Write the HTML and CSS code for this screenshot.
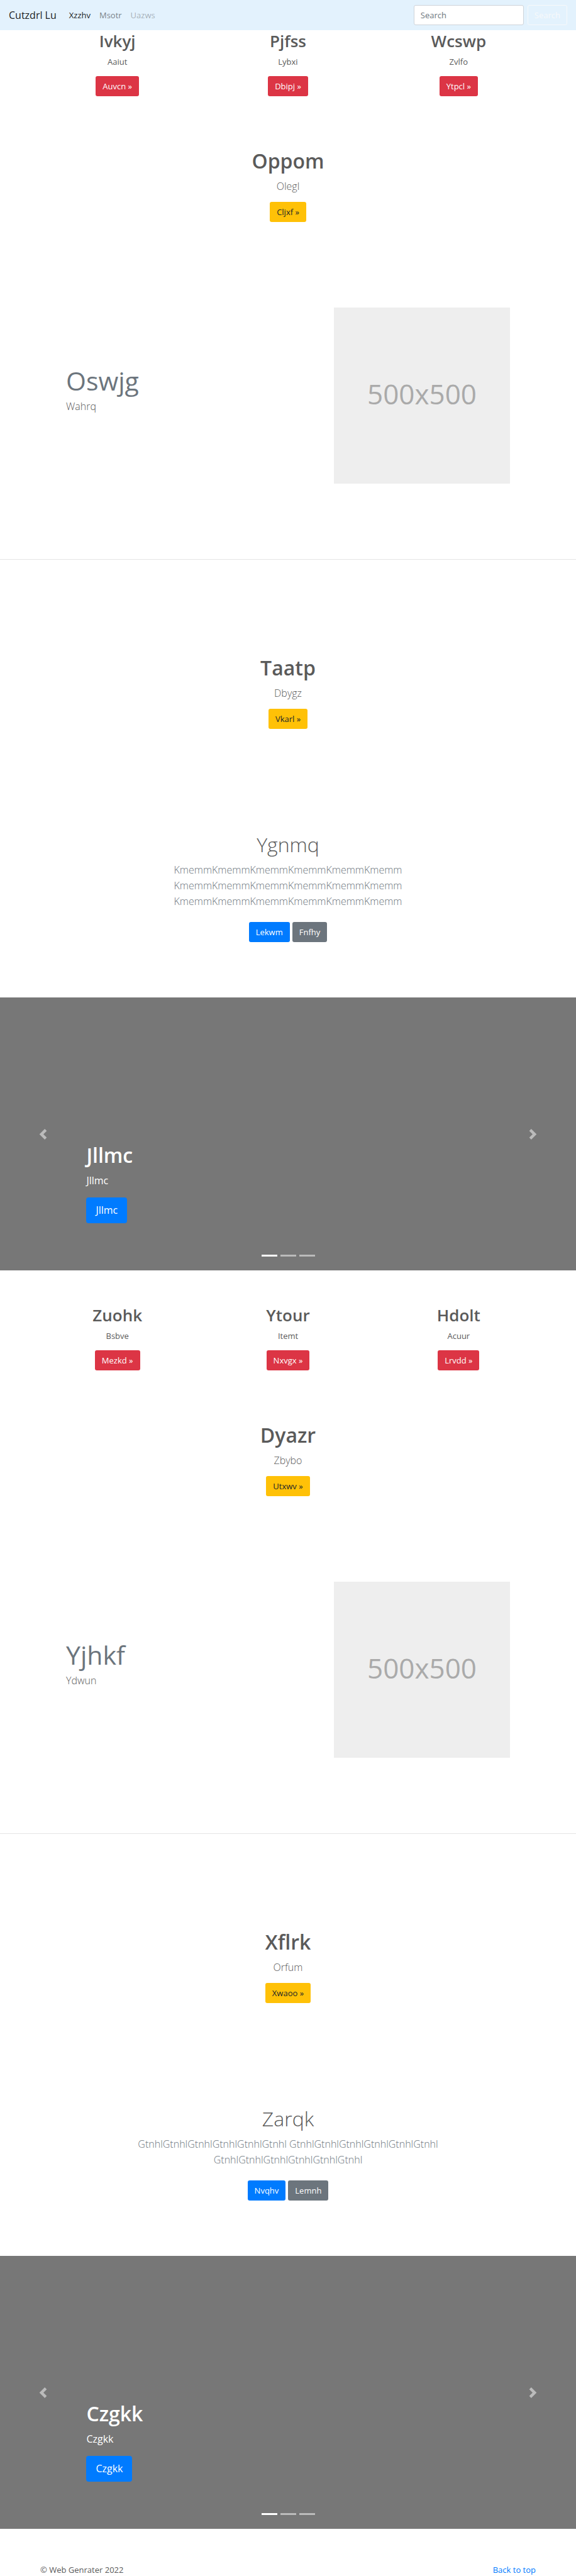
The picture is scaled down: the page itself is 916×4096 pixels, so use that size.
FILE: index.html
```html
<!DOCTYPE html>
<html lang="en">
<head>
<meta charset="utf-8">
<title>Cutzdrl Lu</title>
<link rel="stylesheet" href="styles.css">
</head>
<body id="top">
<header class="navbar">
  <a class="brand" href="#top">Cutzdrl Lu</a>
  <nav class="nav">
    <a class="nav-link active" href="#">Xzzhv</a>
    <a class="nav-link" href="#">Msotr</a>
    <a class="nav-link disabled" href="#">Uazws</a>
  </nav>
  <form class="search">
    <input class="search-input" type="search" placeholder="Search" aria-label="Search">
    <button class="btn btn-outline" type="submit">Search</button>
  </form>
</header>
<main>
  <section class="columns">
    <div class="column"><h2>Ivkyj</h2><p>Aaiut</p><a class="btn btn-danger" href="#">Auvcn »</a></div>
    <div class="column"><h2>Pjfss</h2><p>Lybxi</p><a class="btn btn-danger" href="#">Dbipj »</a></div>
    <div class="column"><h2>Wcswp</h2><p>Zvlfo</p><a class="btn btn-danger" href="#">Ytpcl »</a></div>
  </section>
  <section class="callout">
    <h2 class="title">Oppom</h2>
    <p class="lead">Olegl</p>
    <a class="btn btn-warning" href="#">Cljxf »</a>
  </section>
  <section class="featurette">
    <div class="featurette-text"><h2>Oswjg</h2><p class="lead">Wahrq</p></div>
    <div class="placeholder">500x500</div>
  </section>
  <hr class="divider">
  <section class="callout callout-spaced">
    <h2 class="title">Taatp</h2>
    <p class="lead">Dbygz</p>
    <a class="btn btn-warning" href="#">Vkarl »</a>
  </section>
  <section class="jumbotron">
    <h1 class="title title-light">Ygnmq</h1>
    <p class="lead muted">KmemmKmemmKmemmKmemmKmemmKmemm KmemmKmemmKmemmKmemmKmemmKmemm KmemmKmemmKmemmKmemmKmemmKmemm</p>
    <div class="actions"><a class="btn btn-primary" href="#">Lekwm</a><a class="btn btn-secondary" href="#">Fnfhy</a></div>
  </section>
  <section class="carousel">
    <button class="control" type="button" aria-label="Previous"><svg class="chevron" viewBox="0 0 8 8"><path d="M5.25 0l-4 4 4 4 1.5-1.5-2.5-2.5 2.5-2.5-1.5-1.5z"/></svg></button>
    <div class="slide">
      <div class="caption">
        <h1 class="title">Jllmc</h1>
        <p>Jllmc</p>
        <a class="btn btn-primary btn-lg" href="#">Jllmc</a>
      </div>
      <div class="indicators"><span class="indicator current"></span><span class="indicator"></span><span class="indicator"></span></div>
    </div>
    <button class="control" type="button" aria-label="Next"><svg class="chevron" viewBox="0 0 8 8"><path d="M2.75 0l-1.5 1.5 2.5 2.5-2.5 2.5 1.5 1.5 4-4-4-4z"/></svg></button>
  </section>
  <section class="columns columns-spaced">
    <div class="column"><h2>Zuohk</h2><p>Bsbve</p><a class="btn btn-danger" href="#">Mezkd »</a></div>
    <div class="column"><h2>Ytour</h2><p>Itemt</p><a class="btn btn-danger" href="#">Nxvgx »</a></div>
    <div class="column"><h2>Hdolt</h2><p>Acuur</p><a class="btn btn-danger" href="#">Lrvdd »</a></div>
  </section>
  <section class="callout">
    <h2 class="title">Dyazr</h2>
    <p class="lead">Zbybo</p>
    <a class="btn btn-warning" href="#">Utxwv »</a>
  </section>
  <section class="featurette">
    <div class="featurette-text"><h2>Yjhkf</h2><p class="lead">Ydwun</p></div>
    <div class="placeholder">500x500</div>
  </section>
  <hr class="divider">
  <section class="callout callout-spaced">
    <h2 class="title">Xflrk</h2>
    <p class="lead">Orfum</p>
    <a class="btn btn-warning" href="#">Xwaoo »</a>
  </section>
  <section class="jumbotron">
    <h1 class="title title-light">Zarqk</h1>
    <p class="lead muted">GtnhlGtnhlGtnhlGtnhlGtnhlGtnhl GtnhlGtnhlGtnhlGtnhlGtnhlGtnhl GtnhlGtnhlGtnhlGtnhlGtnhlGtnhl</p>
    <div class="actions"><a class="btn btn-primary" href="#">Nvqhv</a><a class="btn btn-secondary" href="#">Lemnh</a></div>
  </section>
  <section class="carousel">
    <button class="control" type="button" aria-label="Previous"><svg class="chevron" viewBox="0 0 8 8"><path d="M5.25 0l-4 4 4 4 1.5-1.5-2.5-2.5 2.5-2.5-1.5-1.5z"/></svg></button>
    <div class="slide">
      <div class="caption">
        <h1 class="title">Czgkk</h1>
        <p>Czgkk</p>
        <a class="btn btn-primary btn-lg" href="#">Czgkk</a>
      </div>
      <div class="indicators"><span class="indicator current"></span><span class="indicator"></span><span class="indicator"></span></div>
    </div>
    <button class="control" type="button" aria-label="Next"><svg class="chevron" viewBox="0 0 8 8"><path d="M2.75 0l-1.5 1.5 2.5 2.5-2.5 2.5 1.5 1.5 4-4-4-4z"/></svg></button>
  </section>
</main>
<footer class="footer">
  <span>© Web Genrater 2022</span>
  <a href="#top">Back to top</a>
</footer>
</body>
</html>
```
FILE: styles.css
```css
* {
  box-sizing: border-box;
}

body {
  margin: 0;
  background: #fff;
  color: #5a5a5a;
  font: 400 13px/20px "Segoe UI", "Open Sans", "Noto Sans", sans-serif;
}

h1,
h2,
p {
  margin: 0;
}

a {
  color: #007bff;
  text-decoration: none;
}

/* Navigation */
.navbar {
  display: flex;
  align-items: center;
  min-height: 48px;
  padding: 0 14px;
  background: #e3f2fd;
}

.navbar .brand {
  margin-right: 20px;
  color: rgba(0, 0, 0, 0.9);
  font-size: 16px;
}

.nav {
  display: flex;
  gap: 14px;
}

.nav-link {
  color: rgba(0, 0, 0, 0.5);
}

.nav-link.active {
  color: rgba(0, 0, 0, 0.9);
}

.nav-link.disabled {
  color: rgba(0, 0, 0, 0.3);
}

.search {
  display: flex;
  gap: 6px;
  margin-left: auto;
}

.search-input {
  width: 175px;
  height: 32px;
  padding: 0 10px;
  border: 1px solid #ced4da;
  border-radius: 3px;
  background: #fff;
  font: inherit;
}

.search-input::placeholder {
  color: #6c757d;
  opacity: 1;
}

/* Buttons */
.btn {
  display: inline-block;
  height: 32px;
  padding: 5px 10px;
  border: 1px solid transparent;
  border-radius: 3px;
  color: #fff;
  font: inherit;
}

.btn-outline {
  border-color: #f8f9fa;
  background: transparent;
  color: #f8f9fa;
}

.btn-danger {
  background: #dc3545;
}

.btn-warning {
  background: #ffc107;
  color: #212529;
}

.btn-primary {
  background: #007bff;
}

.btn-secondary {
  background: #6c757d;
}

.btn-lg {
  height: 41px;
  padding: 7px 14px;
  border-radius: 4px;
  font-size: 16px;
  line-height: 25px;
}

/* Shared text */
.title {
  margin-bottom: 7px;
  font-size: 32px;
  font-weight: 600;
  line-height: 43px;
}

.title-light {
  font-weight: 300;
}

.lead {
  font-size: 16px;
  font-weight: 300;
  line-height: 25px;
}

.muted {
  color: #6c757d;
}

/* Three columns */
.columns {
  display: grid;
  grid-template-columns: repeat(3, 1fr);
  max-width: 814px;
  margin: 0 auto;
}

.columns-spaced {
  padding-top: 54px;
}

.column {
  display: flex;
  flex-direction: column;
  align-items: center;
}

.column h2 {
  margin-bottom: 6px;
  font-size: 26px;
  font-weight: 600;
  line-height: 34px;
}

.column p {
  margin-bottom: 13px;
}

/* Centred blocks */
.callout,
.jumbotron {
  display: flex;
  flex-direction: column;
  align-items: center;
  text-align: center;
}

.callout {
  padding-top: 81px;
}

.callout-spaced {
  padding-top: 150px;
}

.callout .lead {
  margin-bottom: 12px;
}

.jumbotron {
  padding: 162px 16px 88px;
}

.jumbotron .lead {
  max-width: 540px;
  margin-bottom: 20px;
}

.actions {
  display: flex;
  gap: 4px;
}

/* Text with image */
.featurette {
  display: flex;
  justify-content: space-between;
  padding: 136px 105px 120px;
}

.featurette-text {
  padding-top: 90px;
}

.featurette-text h2 {
  margin-bottom: 2px;
  color: #6c757d;
  font-size: 41px;
  font-weight: 400;
  line-height: 53px;
}

.placeholder {
  display: flex;
  align-items: center;
  justify-content: center;
  width: 280px;
  aspect-ratio: 1;
  padding-bottom: 6px;
  background: #eee;
  color: #aaa;
  font-size: 44px;
  line-height: 1;
}

.divider {
  height: 1px;
  margin: 0;
  border: 0;
  background: #e5e5e5;
}

/* Carousel */
.carousel {
  display: grid;
  grid-template-columns: 15% 1fr 15%;
  min-height: 434px;
  background: #777;
  color: #fff;
}

.control {
  display: flex;
  align-items: center;
  justify-content: center;
  padding: 0;
  border: 0;
  background: none;
  opacity: 0.5;
}

.chevron {
  width: 17px;
  height: 17px;
  fill: #fff;
}

.slide {
  display: flex;
  flex-direction: column;
  justify-content: flex-end;
  padding-bottom: 22px;
}

.caption {
  display: flex;
  flex-direction: column;
  align-items: flex-start;
  margin-bottom: 50px;
}

.caption p {
  margin-bottom: 14px;
  font-size: 16px;
  line-height: 25px;
}

.indicators {
  display: flex;
  justify-content: center;
  gap: 5px;
}

.indicator {
  width: 25px;
  height: 3px;
  background: #fff;
  opacity: 0.5;
}

.indicator.current {
  opacity: 1;
}

/* Footer */
.footer {
  display: flex;
  justify-content: space-between;
  padding: 55px 64px 0;
}
```
